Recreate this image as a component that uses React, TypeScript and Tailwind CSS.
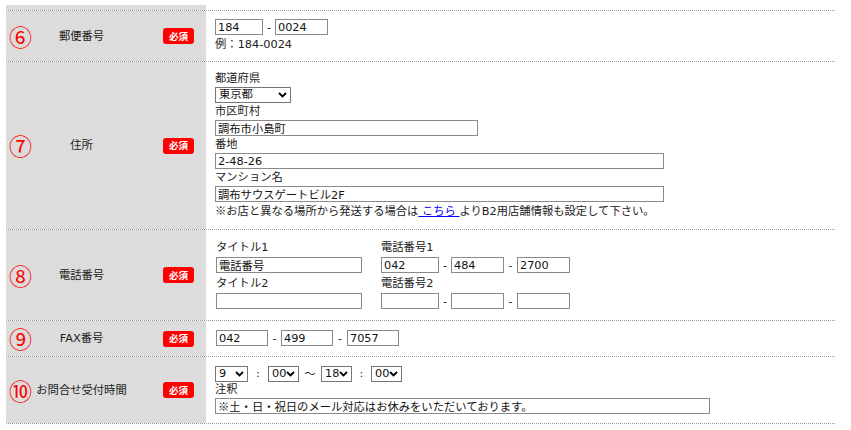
import React from "react";

const font = "font-['DejaVu_Sans','Noto_Sans_CJK_JP',sans-serif]";
const cjk = "font-['Noto_Sans_CJK_JP',sans-serif]";

function Field({ value = "", w }: { value?: string; w: string }) {
  return (
    <input
      defaultValue={value}
      className={`h-[16px] ${w} border border-[#8a8a8a] bg-white px-[2px] text-[11.3px] leading-none text-[#111] outline-none`}
    />
  );
}

function Dropdown({ value, w }: { value: string; w: string }) {
  return (
    <span className={`relative inline-flex h-[16px] ${w}`}>
      <select
        defaultValue={value}
        className="h-full w-full appearance-none border border-[#767676] bg-white pl-[3px] text-[11.3px] leading-none text-[#111] outline-none"
      >
        <option value={value}>{value}</option>
      </select>
      <svg
        className="pointer-events-none absolute right-[4px] top-[5px]"
        width="9"
        height="6"
        viewBox="0 0 9 6"
      >
        <path d="M1 1l3.5 3.5L8 1" stroke="#000" strokeWidth="1.8" fill="none" />
      </svg>
    </span>
  );
}

function Dash({ w }: { w: string }) {
  return <span className={`${w} text-center`}>-</span>;
}

function Row({
  num,
  label,
  h,
  last,
  children,
}: {
  num: string;
  label: string;
  h: string;
  last?: boolean;
  children: React.ReactNode;
}) {
  return (
    <div
      className={`flex ${h} border-t border-dotted border-[#9a9a9a] ${
        last ? "border-b" : ""
      }`}
    >
      <div className="flex w-[200px] shrink-0 items-center bg-[#dcdcdc] pl-[3px] pr-[12px]">
        <span
          className={`w-[26px] ${cjk} text-[23px] leading-none text-[#f00]`}
        >
          {num}
        </span>
        <span className="w-[93px] text-center text-[#222]">{label}</span>
        <span
          className={`ml-auto flex h-[16px] w-[31px] items-center justify-center rounded-[3px] bg-[#f00] ${cjk} text-[9.5px] font-bold text-white`}
        >
          必須
        </span>
      </div>
      <div className="flex-1 bg-white">{children}</div>
    </div>
  );
}

export default function App() {
  return (
    <div className={`min-h-[430px] bg-white pl-[6px] pt-[5px] ${font} text-[11.3px] leading-[17px] text-[#222]`}>
      <div className="w-[829px]">
        <div className="flex h-[5px]">
          <div className="w-[200px] bg-[#dcdcdc]" />
        </div>

        <Row num="⑥" label="郵便番号" h="h-[51px]">
          <div className="pl-[9px] pt-[8px]">
            <div className="flex h-[16px] items-center">
              <Field value="184" w="w-[48px]" />
              <Dash w="w-[12px]" />
              <Field value="0024" w="w-[53px]" />
            </div>
            <div>
              例<span className={cjk}>：</span>184-0024
            </div>
          </div>
        </Row>

        <Row num="⑦" label="住所" h="h-[168px]">
          <div className="flex flex-col items-start pl-[9px] pt-[8px]">
            <div>都道府県</div>
            <Dropdown value="東京都" w="w-[76px]" />
            <div>市区町村</div>
            <Field value="調布市小島町" w="w-[263px]" />
            <div>番地</div>
            <Field value="2-48-26" w="w-[449px]" />
            <div>マンション名</div>
            <Field value="調布サウスゲートビル2F" w="w-[449px]" />
            <div>
              <span className={cjk}>※</span>お店と異なる場所から発送する場合は
              <a href="#" className="text-[#0000ff] underline">
                {" "}こちら{" "}
              </a>
              よりB2用店舗情報も設定して下さい。
            </div>
          </div>
        </Row>

        <Row num="⑧" label="電話番号" h="h-[91px]">
          <div className="flex pl-[10px] pt-[8px]">
            <div className="w-[165px]">
              <div className="flex h-[18px] items-center">タイトル1</div>
              <div className="flex h-[18px] items-center">
                <Field value="電話番号" w="w-[146px]" />
              </div>
              <div className="flex h-[18px] items-center">タイトル2</div>
              <div className="flex h-[18px] items-center">
                <Field w="w-[146px]" />
              </div>
            </div>
            <div>
              <div className="flex h-[18px] items-center">電話番号1</div>
              <div className="flex h-[18px] items-center">
                <Field value="042" w="w-[58px]" />
                <Dash w="w-[12px]" />
                <Field value="484" w="w-[53px]" />
                <Dash w="w-[13px]" />
                <Field value="2700" w="w-[53px]" />
              </div>
              <div className="flex h-[18px] items-center">電話番号2</div>
              <div className="flex h-[18px] items-center">
                <Field w="w-[58px]" />
                <Dash w="w-[12px]" />
                <Field w="w-[53px]" />
                <Dash w="w-[13px]" />
                <Field w="w-[53px]" />
              </div>
            </div>
          </div>
        </Row>

        <Row num="⑨" label="FAX番号" h="h-[36px]">
          <div className="flex h-[16px] items-center pl-[10px] pt-[0px] mt-[9px]">
            <Field value="042" w="w-[52px]" />
            <Dash w="w-[13px]" />
            <Field value="499" w="w-[52px]" />
            <Dash w="w-[14px]" />
            <Field value="7057" w="w-[52px]" />
          </div>
        </Row>

        <Row num="⑩" label="お問合せ受付時間" h="h-[68px]" last>
          <div className="pl-[9px] pt-[9px]">
            <div className="flex h-[15px] items-center">
              <Dropdown value="9" w="w-[33px]" />
              <span className="w-[20px] text-center">:</span>
              <Dropdown value="00" w="w-[31px]" />
              <span className={`w-[22px] text-center ${cjk}`}>～</span>
              <Dropdown value="18" w="w-[31px]" />
              <span className="w-[19px] text-center">:</span>
              <Dropdown value="00" w="w-[31px]" />
            </div>
            <div>注釈</div>
            <input
              defaultValue="※土・日・祝日のメール対応はお休みをいただいております。"
              className={`h-[16px] w-[495px] border border-[#8a8a8a] bg-white px-[2px] ${cjk} text-[11.3px] leading-none text-[#111] outline-none`}
            />
          </div>
        </Row>
      </div>
    </div>
  );
}
